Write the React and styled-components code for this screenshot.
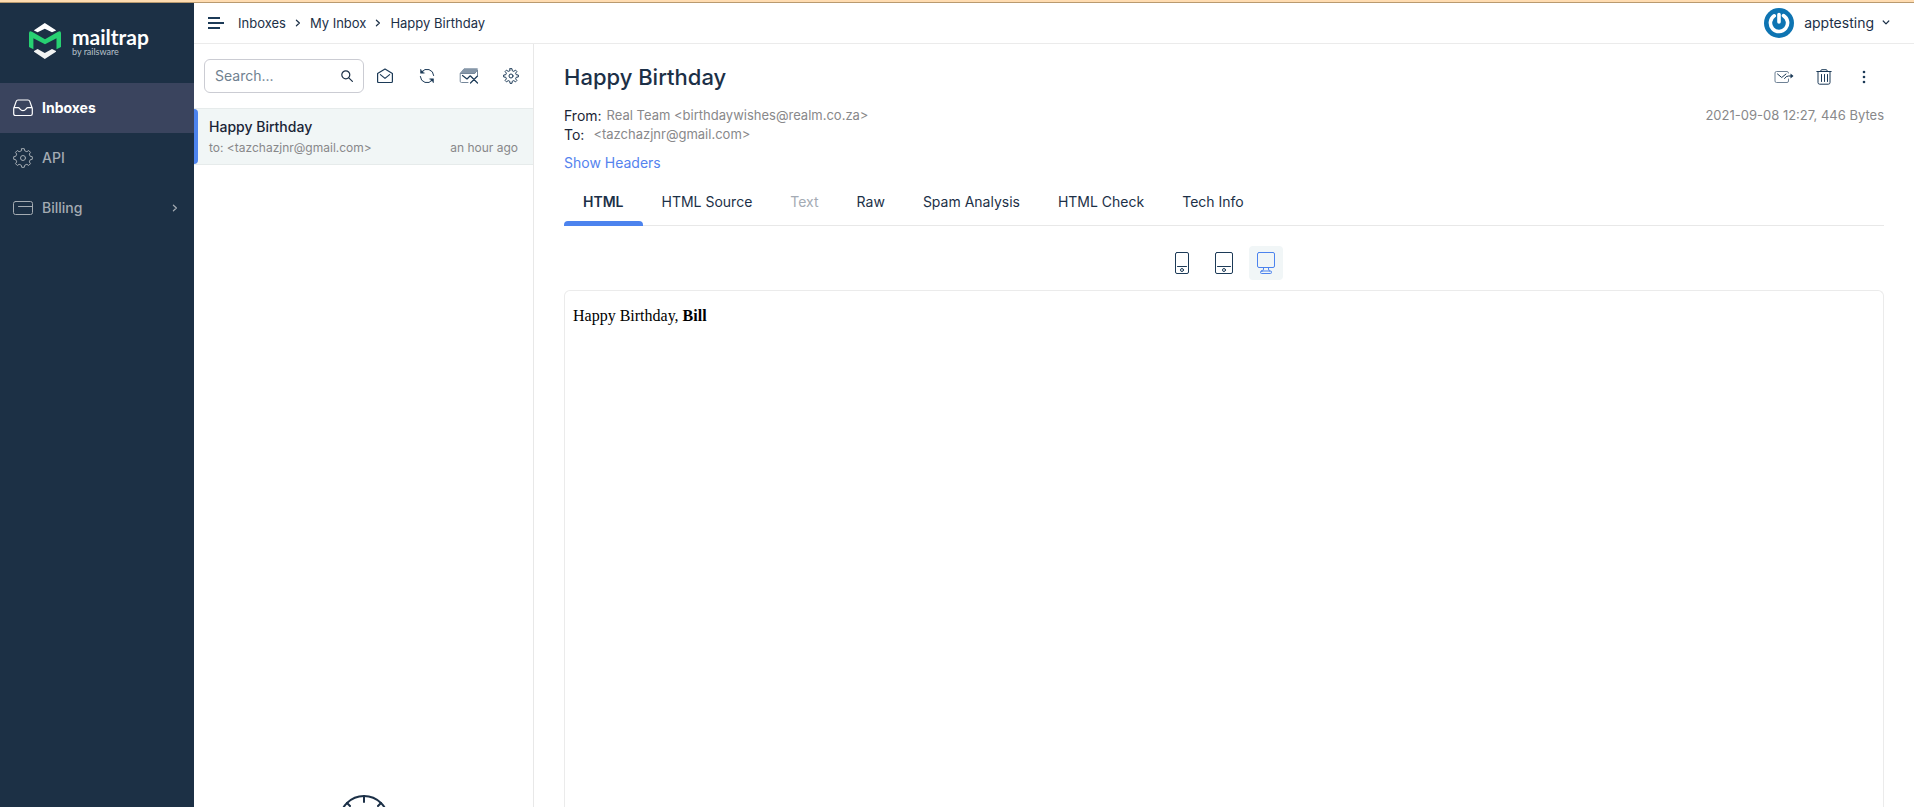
import React from 'react';
import styled, { createGlobalStyle } from 'styled-components';

const Global = createGlobalStyle`
  *, *::before, *::after { box-sizing: border-box; }
  body { margin: 0; background: #fff; color: #1c3047; font: 14px/20px Inter, "Liberation Sans", sans-serif; }
  button, input { font: inherit; color: inherit; }
  a { color: inherit; text-decoration: none; }
`;

const Page = styled.div`
  display: flex;
  flex-direction: column;
  height: 100vh;
  overflow: hidden;
`;
const Strip = styled.div`
  flex: none;
  height: 3px;
  background: #ffdcb1;
  border-bottom: 1px solid #b99a6f;
`;
const Shell = styled.div`
  display: flex;
  flex: 1;
  min-height: 0;
`;

const Sidebar = styled.aside`
  flex: none;
  width: 194px;
  background: #1c3045;
`;
const Brand = styled.a`
  display: flex;
  gap: 10px;
  height: 80px;
  padding: 20px 0 0 28px;
  color: #fff;
`;
const BrandText = styled.span`
  display: flex;
  flex-direction: column;
  padding-top: 4px;
  font-family: Lato, sans-serif;
`;
const BrandName = styled.span`
  font-size: 21px;
  line-height: 20px;
  font-weight: 700;
`;
const BrandBy = styled.span`
  font-size: 9px;
  line-height: 10px;
  color: #b6c0c9;
`;
const NavLink = styled.a`
  display: flex;
  align-items: center;
  gap: 9px;
  height: 50px;
  padding: 0 16px 0 13px;
  font-weight: ${p => (p.$active ? 700 : 500)};
  color: ${p => (p.$active ? '#fff' : '#a4abb2')};
  background: ${p => (p.$active ? '#3a445e' : 'transparent')};
`;
const NavLabel = styled.span`
  flex: 1;
`;

const Main = styled.div`
  display: flex;
  flex-direction: column;
  flex: 1;
  min-width: 0;
`;
const TopBar = styled.header`
  display: flex;
  flex: none;
  align-items: center;
  height: 41px;
  padding: 0 24px 0 14px;
  border-bottom: 1px solid #ebebeb;
`;
const IconButton = styled.button`
  display: flex;
  flex: none;
  align-items: center;
  justify-content: center;
  width: ${p => p.$size || 24}px;
  height: ${p => p.$size || 24}px;
  padding: 0;
  border: 0;
  border-radius: 4px;
  color: ${p => (p.$active ? '#4c83ee' : '#1c3a57')};
  background: ${p => (p.$active ? '#f1f6f7' : 'transparent')};
  cursor: pointer;
`;
const Crumbs = styled.nav`
  display: flex;
  flex: 1;
  align-items: center;
  gap: 9px;
  margin-left: 14px;
  font-size: 13px;
`;
const Account = styled.button`
  display: flex;
  align-items: center;
  gap: 10px;
  padding: 0;
  border: 0;
  background: none;
  cursor: pointer;
`;
const AccountName = styled.span`
  display: flex;
  align-items: center;
  gap: 8px;
`;

const Columns = styled.div`
  display: flex;
  flex: 1;
  min-height: 0;
`;
const ListPane = styled.section`
  display: flex;
  flex: none;
  flex-direction: column;
  width: 340px;
  border-right: 1px solid #e8e8e8;
  overflow: hidden;
`;
const Tools = styled.div`
  display: flex;
  align-items: center;
  padding: 15px 10px;
`;
const SearchBox = styled.label`
  display: flex;
  flex: 1;
  align-items: center;
  min-width: 0;
  height: 34px;
  padding: 0 10px;
  border: 1px solid #cbccd3;
  border-radius: 6px;
`;
const SearchInput = styled.input`
  flex: 1;
  min-width: 0;
  padding: 0;
  border: 0;
  outline: 0;
  background: none;
  &::placeholder { color: #6f8190; opacity: 1; }
`;
const ToolIcons = styled.div`
  display: flex;
  gap: 18px;
  margin-left: 9px;
`;
const MessageLink = styled.a`
  display: flex;
  flex-direction: column;
  gap: 1px;
  padding: 8px 15px 6px 11px;
  background: #f1f6f6;
  border: solid #e6ebeb;
  border-width: 1px 0;
  position: relative;
  padding-left: 15px;
  &::before {
    content: "";
    position: absolute;
    inset: 0 auto 0 0;
    width: 4px;
    border-radius: 0 4px 4px 0;
    background: #4c83ee;
  }
`;
const MessageTitle = styled.span`
  font-weight: 500;
  color: #1a2536;
`;
const MessageMeta = styled.span`
  display: flex;
  justify-content: space-between;
  font-size: 12px;
  color: #88888a;
`;
const Loader = styled.div`
  display: flex;
  justify-content: center;
  margin: auto 0 -39px;
`;

const Detail = styled.main`
  display: flex;
  flex: 1;
  flex-direction: column;
  min-width: 0;
  padding: 18px 30px 0;
`;
const Row = styled.div`
  display: flex;
  align-items: center;
  justify-content: space-between;
`;
const Title = styled.h1`
  margin: 0;
  font-size: 22px;
  line-height: 30px;
  font-weight: 500;
`;
const Actions = styled.div`
  display: flex;
  gap: 16px;
  margin-right: 8px;
`;
const Info = styled.div`
  display: flex;
  align-items: flex-start;
  justify-content: space-between;
  margin-top: 14px;
  font-size: 13px;
  line-height: 19px;
  color: #88888a;
`;
const Address = styled.div`
  display: flex;
  gap: ${p => p.$gap}px;
`;
const AddressLabel = styled.span`
  font-size: 14px;
  color: #1a2536;
`;
const HeadersLink = styled.a`
  align-self: flex-start;
  margin-top: 9px;
  color: #5583ee;
`;
const Tabs = styled.div`
  display: flex;
  flex: none;
  margin-top: 9px;
  border-bottom: 1px solid #e8e8e8;
`;
const Tab = styled.button`
  position: relative;
  height: 43px;
  padding: 0 19px 4px;
  border: 0;
  background: none;
  font-weight: ${p => (p.$active ? 600 : 400)};
  color: ${p => (p.disabled ? '#a4abb4' : '#1c3047')};
  &::after {
    content: "";
    display: ${p => (p.$active ? 'block' : 'none')};
    position: absolute;
    inset: auto 0 -1px;
    height: 5px;
    border-radius: 4px 4px 0 0;
    background: #4c83ee;
  }
`;
const Devices = styled.div`
  display: flex;
  justify-content: center;
  gap: 8px;
  padding: 20px 0 10px;
`;
const Preview = styled.article`
  flex: 1;
  padding: 15px 8px;
  border: 1px solid #ebebeb;
  border-bottom: 0;
  border-radius: 6px 6px 0 0;
  font: 16px/20px "Liberation Serif", serif;
  color: #000;
`;

const Icon = ({ w = 18, h = w, sw = 1, children, ...rest }) => (
  <svg width={w} height={h} viewBox={`0 0 ${w} ${h}`} fill="none" stroke="currentColor" strokeWidth={sw}
    strokeLinecap="round" strokeLinejoin="round" aria-hidden="true" {...rest}>{children}</svg>
);

const LogoMark = () => (
  <Icon w={34} h={36} stroke="none">
    <path d="M6 7.2 16.8 0 28 7.2v.3l-4 1.7-7.2-3.4-7.2 3.4L6 7.5z" fill="#fff" />
    <path d="M6 28.8 16.8 36 28 28.8v-.7l-4-2-7.2 4-7.2-4L6 28.1z" fill="#f1f3f3" />
    <path d="M1 10.2Q1 7.2 4.4 9L17 16.2 29.6 9Q33 7.2 33 10.2V24l-4.500 2.300V15.200L17 21.300 5.400 15.200v11.100L1 24z" fill="#27d172" />
  </Icon>
);

const teeth = 8;
const gearPath = (c, r, d) => {
  const pts = [];
  for (let i = 0; i < teeth; i++) {
    [[-0.17, r], [0.17, r], [0.3, r - d], [0.7, r - d]].forEach(([o, rad]) => {
      const a = ((i + o) * 2 * Math.PI) / teeth;
      pts.push(`${(c + rad * Math.sin(a)).toFixed(2)} ${(c - rad * Math.cos(a)).toFixed(2)}`);
    });
  }
  return `M${pts.join('L')}Z`;
};
const Gear = ({ size }) => (
  <Icon w={size}>
    <path d={gearPath(size / 2, size / 2 - 0.6, 2)} />
    <circle cx={size / 2} cy={size / 2} r={size > 17 ? 2.5 : 2} />
  </Icon>
);
const Chevron = () => (
  <Icon w={6} h={8} sw={1.2}><path d="M1.4 1.2 4.4 4 1.4 6.8" /></Icon>
);
const ChevronDown = () => (
  <Icon w={8} h={8} sw={1.2}><path d="M1.2 2 4 4.800 6.800 2" /></Icon>
);

const tabs = ['HTML', 'HTML Source', 'Text', 'Raw', 'Spam Analysis', 'HTML Check', 'Tech Info'];

export default function App() {
  return (
    <Page>
      <Global />
      <Strip />
      <Shell>
        <Sidebar>
          <Brand href="#">
            <LogoMark />
            <BrandText>
              <BrandName>mailtrap</BrandName>
              <BrandBy>by railsware</BrandBy>
            </BrandText>
          </Brand>
          <nav aria-label="Main">
            <NavLink href="#" $active>
              <Icon w={20} h={18} sw={1.2}>
                <path d="M.7 9.5 3.2 2.4Q3.700 1 5 1h10q1.300 0 1.800 1.400l2.500 7.100v5.300q0 1.700-1.700 1.700H2.400Q.7 16.500.7 14.800zM.8 8.600h4.400c1.700 0 1.800 3 4.800 3s3.100-3 4.800-3h4.400" />
              </Icon>
              <NavLabel>Inboxes</NavLabel>
            </NavLink>
            <NavLink href="#">
              <Gear size={20} />
              <NavLabel>API</NavLabel>
            </NavLink>
            <NavLink href="#">
              <Icon w={20} h={16}>
                <rect x=".5" y="1.5" width="19" height="13" rx="2" />
                <path d="M5.5 6.5h14" />
              </Icon>
              <NavLabel>Billing</NavLabel>
              <Chevron />
            </NavLink>
          </nav>
        </Sidebar>

        <Main>
          <TopBar>
            <IconButton $size={16} aria-label="Toggle menu">
              <Icon w={16} h={16} sw={2} strokeLinecap="butt"><path d="M0 3h12M0 8h16M0 13h12" /></Icon>
            </IconButton>
            <Crumbs aria-label="Breadcrumb">
              <a href="#">Inboxes</a>
              <Chevron />
              <a href="#">My Inbox</a>
              <Chevron />
              <a href="#">Happy Birthday</a>
            </Crumbs>
            <Account>
              <Icon w={30} stroke="none">
                <circle cx="15" cy="15" r="15" fill="#0e74b2" />
                <path d="M10.2 7.8A8.6 8.600 0 1 0 19.500 7.600M15 6.500v7.500" fill="none" stroke="#fff" strokeWidth="3.600" />
              </Icon>
              <AccountName>apptesting <ChevronDown /></AccountName>
            </Account>
          </TopBar>

          <Columns>
            <ListPane>
              <Tools>
                <SearchBox>
                  <SearchInput type="text" placeholder="Search..." aria-label="Search" />
                  <Icon w={12} sw={1.2}><circle cx="4.8" cy="4.8" r="4" /><path d="m7.800 7.800 3.600 3.600" /></Icon>
                </SearchBox>
                <ToolIcons>
                  <IconButton aria-label="Mark all as read">
                    <Icon w={16} sw={1.2}><path d="M.6 5.600 8 1l7.400 4.600v7.900q0 1-1 1H1.600q-1 0-1-1zM3.400 6.600 8 10.400l4.600-3.800" /></Icon>
                  </IconButton>
                  <IconButton aria-label="Refresh">
                    <Icon w={16}>
                      <path d="M2.800 3.800A6.700 6.700 0 0 1 14.700 7.500M13.200 12.200A6.700 6.700 0 0 1 1.300 8.500" />
                      <path d="M1.500 1.500v3.700h3.700zM14.500 14.500v-3.700h-3.700z" fill="currentColor" strokeWidth=".5" />
                    </Icon>
                  </IconButton>
                  <IconButton aria-label="Clean inbox">
                    <Icon w={20} h={16}>
                      <path d="M1.500 5 5 .8h13.500L16 5z" fill="#8797a8" stroke="#8797a8" />
                      <path d="M9 14.500H2.500q-1.300 0-1.300-1.300V5.500h14.500L18.500 2v5" stroke="#75879a" />
                      <path d="m3.500 7.500 4.500 3.500 3-3M11.500 8l7 7M18.500 8l-7 7" strokeWidth="1.2" />
                    </Icon>
                  </IconButton>
                  <IconButton aria-label="Inbox settings"><Gear size={16} /></IconButton>
                </ToolIcons>
              </Tools>
              <MessageLink href="#">
                <MessageTitle>Happy Birthday</MessageTitle>
                <MessageMeta>
                  <span>to: &lt;tazchazjnr@gmail.com&gt;</span>
                  <time>an hour ago</time>
                </MessageMeta>
              </MessageLink>
              <Loader>
                <Icon w={52} sw={2}>
                  <circle cx="26" cy="26" r="24" />
                  <path d="M26 2v6M26 50v-6M2 26h6M50 26h-6M9 9l3 3M43 9l-3 3M9 43l3-3M43 43l-3-3M26 26V14" />
                </Icon>
              </Loader>
            </ListPane>

            <Detail>
              <Row>
                <Title>Happy Birthday</Title>
                <Actions>
                  <IconButton aria-label="Forward">
                    <Icon w={20} h={16}>
                      <path d="M14.500 10v2q0 1.500-1.500 1.500H2.500Q1 13.500 1 12V4q0-1.500 1.500-1.500H13q1.500 0 1.500 1.500" stroke="#6f8296" />
                      <path d="m3.500 5 4.200 3.500L12 5M10.500 9.500q1.500-2.500 4-2.500h3.500" />
                      <path d="M16.500 4.500 19.500 7l-3 2.500z" fill="currentColor" stroke="none" />
                    </Icon>
                  </IconButton>
                  <IconButton aria-label="Delete">
                    <Icon w={16}>
                      <path d="M.8 2.500h14.400M4.500 2.500q0-1.800 1.500-1.800h4q1.500 0 1.500 1.800M2 2.500v11q0 1.700 1.700 1.700h8.600q1.700 0 1.700-1.700v-11M5.500 5.500v7M8.500 5.500v7M11.500 5.500v7" />
                    </Icon>
                  </IconButton>
                  <IconButton aria-label="More">
                    <Icon w={4} h={14} fill="currentColor" stroke="none">
                      <circle cx="2" cy="2" r="1.300" /><circle cx="2" cy="7" r="1.300" /><circle cx="2" cy="12" r="1.300" />
                    </Icon>
                  </IconButton>
                </Actions>
              </Row>
              <Info>
                <div>
                  <Address $gap={5}><AddressLabel>From:</AddressLabel><span>Real Team &lt;birthdaywishes@realm.co.za&gt;</span></Address>
                  <Address $gap={9}><AddressLabel>To:</AddressLabel><span>&lt;tazchazjnr@gmail.com&gt;</span></Address>
                </div>
                <time>2021-09-08 12:27, 446 Bytes</time>
              </Info>
              <HeadersLink href="#">Show Headers</HeadersLink>
              <Tabs role="tablist">
                {tabs.map((t, i) => (
                  <Tab key={t} role="tab" aria-selected={i === 0} $active={i === 0} disabled={t === 'Text'}>{t}</Tab>
                ))}
              </Tabs>
              <Devices>
                <IconButton $size={34} aria-label="Phone">
                  <Icon w={14} h={22}>
                    <rect x=".5" y=".5" width="13" height="21" rx="1.5" /><path d="M2.500 14.500h9" /><circle cx="7" cy="18" r="1.5" />
                  </Icon>
                </IconButton>
                <IconButton $size={34} aria-label="Tablet">
                  <Icon w={18} h={22}>
                    <rect x=".5" y=".5" width="17" height="21" rx="1.5" /><path d="M2.500 14.500h13" /><circle cx="9" cy="18" r="1.5" />
                  </Icon>
                </IconButton>
                <IconButton $size={34} $active aria-label="Desktop">
                  <Icon w={18} h={22}>
                    <rect x=".5" y=".5" width="17" height="15" rx="1.5" />
                    <path d="M6.500 15.500v1.500q0 1.500-1.500 2.500M11.500 15.500v1.500q0 1.500 1.500 2.500" />
                    <rect x="3.5" y="19" width="11" height="2.5" rx="1" />
                  </Icon>
                </IconButton>
              </Devices>
              <Preview>Happy Birthday, <b>Bill</b></Preview>
            </Detail>
          </Columns>
        </Main>
      </Shell>
    </Page>
  );
}
